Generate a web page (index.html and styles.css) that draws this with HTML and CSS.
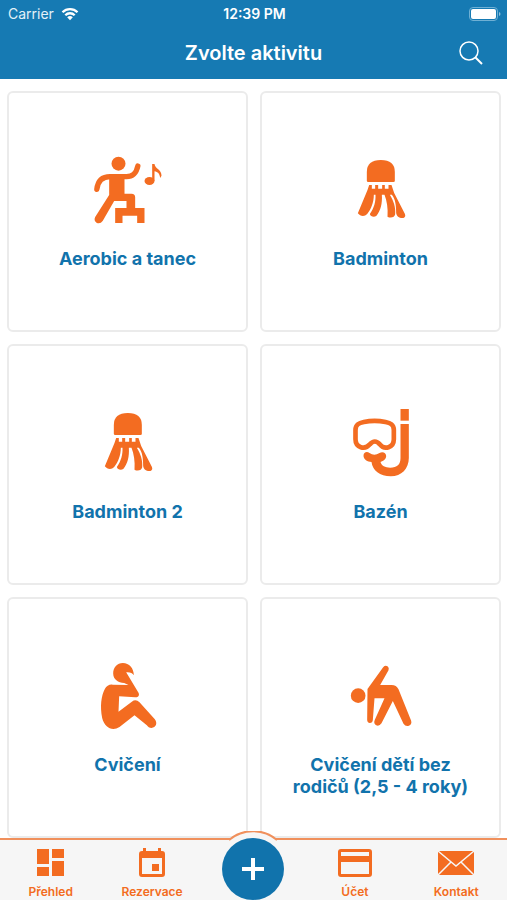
FILE: index.html
```
<!DOCTYPE html>
<html lang="cs">
<head>
    <meta charset="UTF-8">
    <meta name="viewport" content="width=device-width, initial-scale=1.0">
    <title>Zvolte aktivitu</title>
    <link rel="stylesheet" href="styles.css">
</head>
<body>
    <header class="header">
        <div class="status">
            <div class="carrier">
                <span>Carrier</span>
                <svg class="wifi" viewBox="0 0 18 14">
                    <path d="M1.5 5.2a10.6 10.6 0 0 1 15 0M4.3 8.2a6.7 6.7 0 0 1 9.4 0" fill="none" stroke="#fff" stroke-width="2.3"/>
                    <path d="M9 13.2 6.2 10.3a4 4 0 0 1 5.6 0z" fill="#fff"/>
                </svg>
            </div>
            <span class="time">12:39 PM</span>
            <svg class="battery" viewBox="0 0 32 14">
                <rect x=".5" y=".5" width="28" height="13" rx="3.5" fill="none" stroke="#6fb0d4"/>
                <rect x="2" y="2" width="25" height="10" rx="2" fill="#fff"/>
                <path d="M30 5v4q1.5-.5 1.5-2t-1.5-2z" fill="#8fc0dc"/>
            </svg>
        </div>
        <div class="navbar">
            <h1 class="title">Zvolte aktivitu</h1>
            <button class="search" type="button" aria-label="Hledat">
                <svg viewBox="0 0 24 24">
                    <circle cx="10" cy="10" r="9" fill="none" stroke="#fff" stroke-width="1.5"/>
                    <path d="m16.5 16.5 6.5 6.5" stroke="#fff" stroke-width="2"/>
                </svg>
            </button>
        </div>
    </header>

    <main class="activities">
        <a class="card" href="#">
            <svg class="icon" viewBox="34.5 27 216 216">
                <circle cx="114" cy="56" r="21"/>
                <path d="M49 133C52 105 67 95 89 95h49c18 0 29-8 34-32" fill="none" stroke="currentColor" stroke-width="16" stroke-linecap="round"/>
                <path d="M86 88h46v58h21q11 0 11 11v32h28v45h-22v-22h-44v22h-22v-45h34v-21h-37L67 227q-8 11-19 6-9-6-4-17l42-66z"/>
                <ellipse cx="207" cy="108" rx="15" ry="12"/>
                <path d="M215 57h7c1 14 22 17 21 35l-4 7c-2-14-7-18-17-20v29h-7z"/>
            </svg>
            <span class="name">Aerobic a tanec</span>
        </a>
        <a class="card" href="#">
            <svg class="icon" viewBox="13.5 12 216 216">
                <path d="M79 92V66q0-36 42-36t42 36v26q0 4-4 4H83q-4 0-4-4z"/>
                <path d="M86 105h8v11h10v-11h9v11h12v-11h8v11h11v-11h9l8 24 32 62q4 9-4 13c-11 2-21-5-22-15 0-21-2-42-13-55h-6c11 18 18 37 16 59-1 9-14 13-23 7 2-26-2-48-9-66h-8c2 27-4 47-16 63-7 6-18 3-20-5 13-18 18-38 17-58h-5c0 22-8 43-20 58-8 9-21 7-28-2l29-70z"/>
            </svg>
            <span class="name">Badminton</span>
        </a>
        <a class="card" href="#">
            <svg class="icon" viewBox="13.5 12 216 216">
                <path d="M79 92V66q0-36 42-36t42 36v26q0 4-4 4H83q-4 0-4-4z"/>
                <path d="M86 105h8v11h10v-11h9v11h12v-11h8v11h11v-11h9l8 24 32 62q4 9-4 13c-11 2-21-5-22-15 0-21-2-42-13-55h-6c11 18 18 37 16 59-1 9-14 13-23 7 2-26-2-48-9-66h-8c2 27-4 47-16 63-7 6-18 3-20-5 13-18 18-38 17-58h-5c0 22-8 43-20 58-8 9-21 7-28-2l29-70z"/>
            </svg>
            <span class="name">Badminton 2</span>
        </a>
        <a class="card" href="#">
            <svg class="icon" viewBox="13.5 21 216 216">
                <path d="M45 90c0-17 11-21 25-24q32-7 65 0c14 3 25 7 25 24v28c0 25-28 33-42 15q-15-17-30 0c-15 18-43 10-43-15z" fill="none" stroke="currentColor" stroke-width="14"/>
                <path d="M180 27h25v35h-25z"/>
                <path d="M180 72h25v102c0 32-22 55-54 55-33 0-55-18-58-43-12-1-24-8-24-19 0-10 10-14 18-8q14 10 30 0c9-6 20-1 20 9 0 9-8 15-17 18 3 11 14 17 29 17 21 0 31-9 31-29z"/>
            </svg>
            <span class="name">Bazén</span>
        </a>
        <a class="card" href="#">
            <svg class="icon" viewBox="19.5 30 216 216">
                <path d="M112 39c19 0 33 16 33 37-4-7-12-10-23-9l37 61c4 8-1 15-10 14l-48-3-2 46 40-30q12-9 23 2l46 51c9 12 3 25-10 26-6 0-11-3-14-8l-37-30-45 35c-22 14-45 1-52-27-7-35-3-66 8-87 5-9 13-14 23-13l48 1-13-6c-18-1-33-10-33-29 0-17 12-31 29-31z"/>
            </svg>
            <span class="name">Cvičení</span>
        </a>
        <a class="card" href="#">
            <svg class="icon" viewBox="28.5 30 216 216">
                <circle cx="68" cy="137" r="22"/>
                <path d="M96 117 143 52q6-7 13-3 6 5 3 12l-25 44h34q15 0 21 13l38 94q3 11-7 15-10 3-16-6l-32-68-34 67q-7 10-16 6-9-6-4-17l29-64h-30l-5 65q-1 9-9 9-8-1-8-10z"/>
            </svg>
            <span class="name">Cvičení dětí bez rodičů (2,5 - 4 roky)</span>
        </a>
    </main>

    <nav class="tabbar">
        <a class="tab" href="#">
            <svg class="tab-icon" viewBox="0 0 38 32">
                <path d="M5 2h12v15H5zM20 2h12v9H20zM5 20h12v9H5zM20 14h12v15H20z"/>
            </svg>
            <span>Přehled</span>
        </a>
        <a class="tab" href="#">
            <svg class="tab-icon" viewBox="0 0 38 32">
                <path fill-rule="evenodd" d="M10 1h3v3h12V1h3v3h1q3 0 3 3v20q0 3-3 3H9q-3 0-3-3V7q0-3 3-3h1zM9 11v16h20V11zM19 17h7v7h-7z"/>
            </svg>
            <span>Rezervace</span>
        </a>
        <div class="tab tab-add">
            <svg class="bump" viewBox="0 0 48 12">
                <path class="bump-fill" d="M0 9A37 37 0 0 1 48 9v3H0z"/>
                <path class="bump-line" d="M0 9A37 37 0 0 1 48 9"/>
            </svg>
            <button class="add" type="button" aria-label="Přidat">
                <svg viewBox="0 0 24 24"><path d="M12 1v22M1 12h22" stroke="#fff" stroke-width="4"/></svg>
            </button>
        </div>
        <a class="tab" href="#">
            <svg class="tab-icon" viewBox="0 0 38 32">
                <path fill-rule="evenodd" d="M5 2h28q3 0 3 3v22q0 3-3 3H5q-3 0-3-3V5q0-3 3-3zm0 3v4h28V5zm0 10v12h28V15z"/>
            </svg>
            <span>Účet</span>
        </a>
        <a class="tab" href="#">
            <svg class="tab-icon" viewBox="0 0 38 32">
                <path d="M1 4h36v24H1z"/>
                <path d="m1 4 18 15L37 4M1 28l13-13M37 28 24 15" fill="none" stroke="#f6f6f6" stroke-width="1.5"/>
            </svg>
            <span>Kontakt</span>
        </a>
    </nav>
</body>
</html>
```
FILE: styles.css
```
* {
    box-sizing: border-box;
}
body {
    margin: 0;
    height: 100vh;
    display: flex;
    flex-direction: column;
    overflow: hidden;
    background-color: #fff;
    font-family: Inter, "Liberation Sans", Arial, sans-serif;
}
svg {
    display: block;
    fill: currentColor;
}
a {
    text-decoration: none;
}
button {
    border: none;
    padding: 0;
    cursor: pointer;
}
.header {
    flex: none;
    background-color: #167ab3;
    color: #fff;
}
.status {
    display: grid;
    grid-template-columns: 1fr auto 1fr;
    align-items: center;
    height: 27px;
    padding: 0 6px 0 8px;
    font-size: 14px;
}
.carrier {
    display: flex;
    align-items: center;
    gap: 7px;
    color: #e3f1f8;
}
.wifi {
    width: 18px;
    height: 14px;
}
.time {
    font-weight: 600;
}
.battery {
    width: 32px;
    height: 14px;
    justify-self: end;
}
.navbar {
    display: grid;
    grid-template-columns: 1fr auto 1fr;
    align-items: center;
    height: 52px;
    padding: 0 24px;
}
.title {
    grid-column: 2;
    margin: 0;
    font-size: 20px;
    line-height: 24px;
    font-weight: 600;
}
.search {
    justify-self: end;
    width: 24px;
    height: 24px;
    background: none;
}
.activities {
    flex: 1;
    min-height: 0;
    overflow: hidden;
    display: grid;
    grid-template-columns: 1fr 1fr;
    align-content: start;
    gap: 12px;
    padding: 12px 6px 12px 7px;
}
.card {
    aspect-ratio: 1;
    display: flex;
    flex-direction: column;
    align-items: center;
    gap: 22px;
    padding: 61px 20px 0;
    border: 2px solid #ebebeb;
    border-radius: 6px;
    color: #f36c21;
}
.icon {
    flex: none;
    width: 72px;
    height: 72px;
}
.name {
    color: #1173ac;
    font-size: 18px;
    line-height: 22px;
    font-weight: 700;
    text-align: center;
}
.tabbar {
    flex: none;
    display: grid;
    grid-template-columns: repeat(5, 1fr);
    height: 62px;
    border-top: 2px solid #f0905c;
    background-color: #f6f6f6;
}
.tab {
    display: flex;
    flex-direction: column;
    align-items: center;
    gap: 5px;
    padding-top: 7px;
    color: #f36c21;
    font-size: 12px;
    line-height: 16px;
    font-weight: 600;
}
.tab-icon {
    width: 38px;
    height: 32px;
}
.tab-add {
    position: relative;
    padding-top: 0;
}
.bump {
    position: absolute;
    top: -9px;
    width: 48px;
    height: 12px;
}
.bump-fill {
    fill: #f6f6f6;
}
.bump-line {
    fill: none;
    stroke: #f0905c;
    stroke-width: 2;
}
.add {
    position: relative;
    flex: none;
    width: 62px;
    height: 62px;
    margin-top: -2px;
    border-radius: 50%;
    background-color: #1173ac;
}
.add svg {
    width: 24px;
    height: 24px;
    margin: 0 auto;
}
```
